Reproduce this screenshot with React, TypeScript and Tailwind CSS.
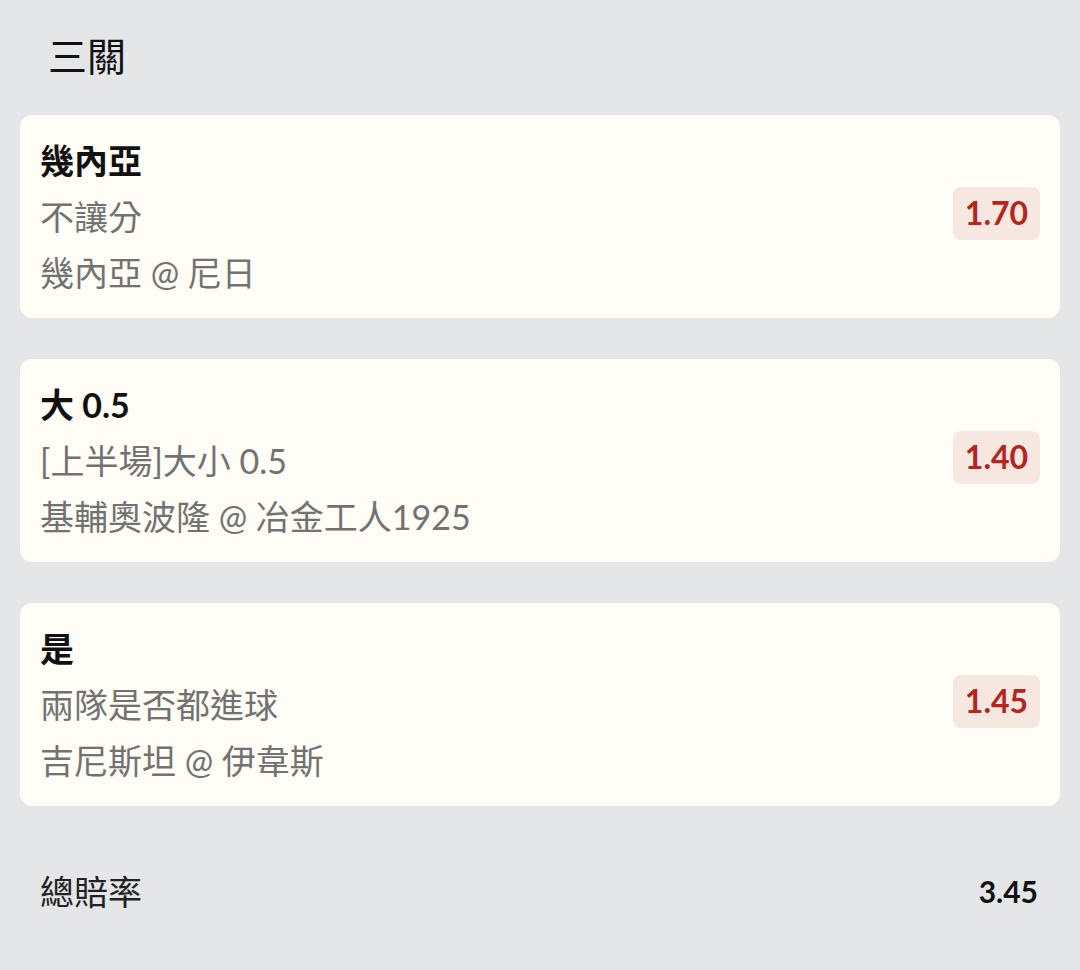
import React from 'react';

const font = "font-['Lato','Noto_Sans_CJK_TC',sans-serif]";

const legs = [
  { pick: '幾內亞', market: '不讓分', match: '幾內亞 @ 尼日', odds: '1.70' },
  { pick: '大 0.5', market: '[上半場]大小 0.5', match: '基輔奧波隆 @ 冶金工人1925', odds: '1.40' },
  { pick: '是', market: '兩隊是否都進球', match: '吉尼斯坦 @ 伊韋斯', odds: '1.45' },
];

const LegCard = ({ pick, market, match, odds }: { pick: string; market: string; match: string; odds: string }) => {
  return (
    <div className="bg-[#fffdf5] rounded-[12px] px-[20px] pt-[18px] pb-[17px] flex items-center justify-between">
      <div className="flex flex-col text-[34px] leading-[56px]">
        <div className="font-bold text-[#111]">{pick}</div>
        <div className="text-[#727272]">{market}</div>
        <div className="text-[#727272]">{match}</div>
      </div>
      <div className="mb-[8px] bg-[#f7e7e1] rounded-[8px] h-[53px] w-[87px] flex items-center justify-center text-[32px] font-bold text-[#b3261e]">
        {odds}
      </div>
    </div>
  );
};

export default function App() {
  return (
    <div className={`min-h-[970px] w-[1080px] bg-[#e5e6e8] ${font}`}>
      <div className="h-[115px] flex items-center pl-[48px] pb-[2px] text-[39px] text-[#111]">三關</div>
      <div className="flex flex-col gap-[41px] px-[20px]">
        {legs.map((l) => (
          <LegCard key={l.pick} {...l} />
        ))}
      </div>
      <div className="mt-[57px] flex items-center justify-between pl-[40px] pr-[42px] h-[56px]">
        <span className="text-[34px] text-[#222]">總賠率</span>
        <span className="text-[30px] font-bold text-[#111]">3.45</span>
      </div>
    </div>
  );
}
